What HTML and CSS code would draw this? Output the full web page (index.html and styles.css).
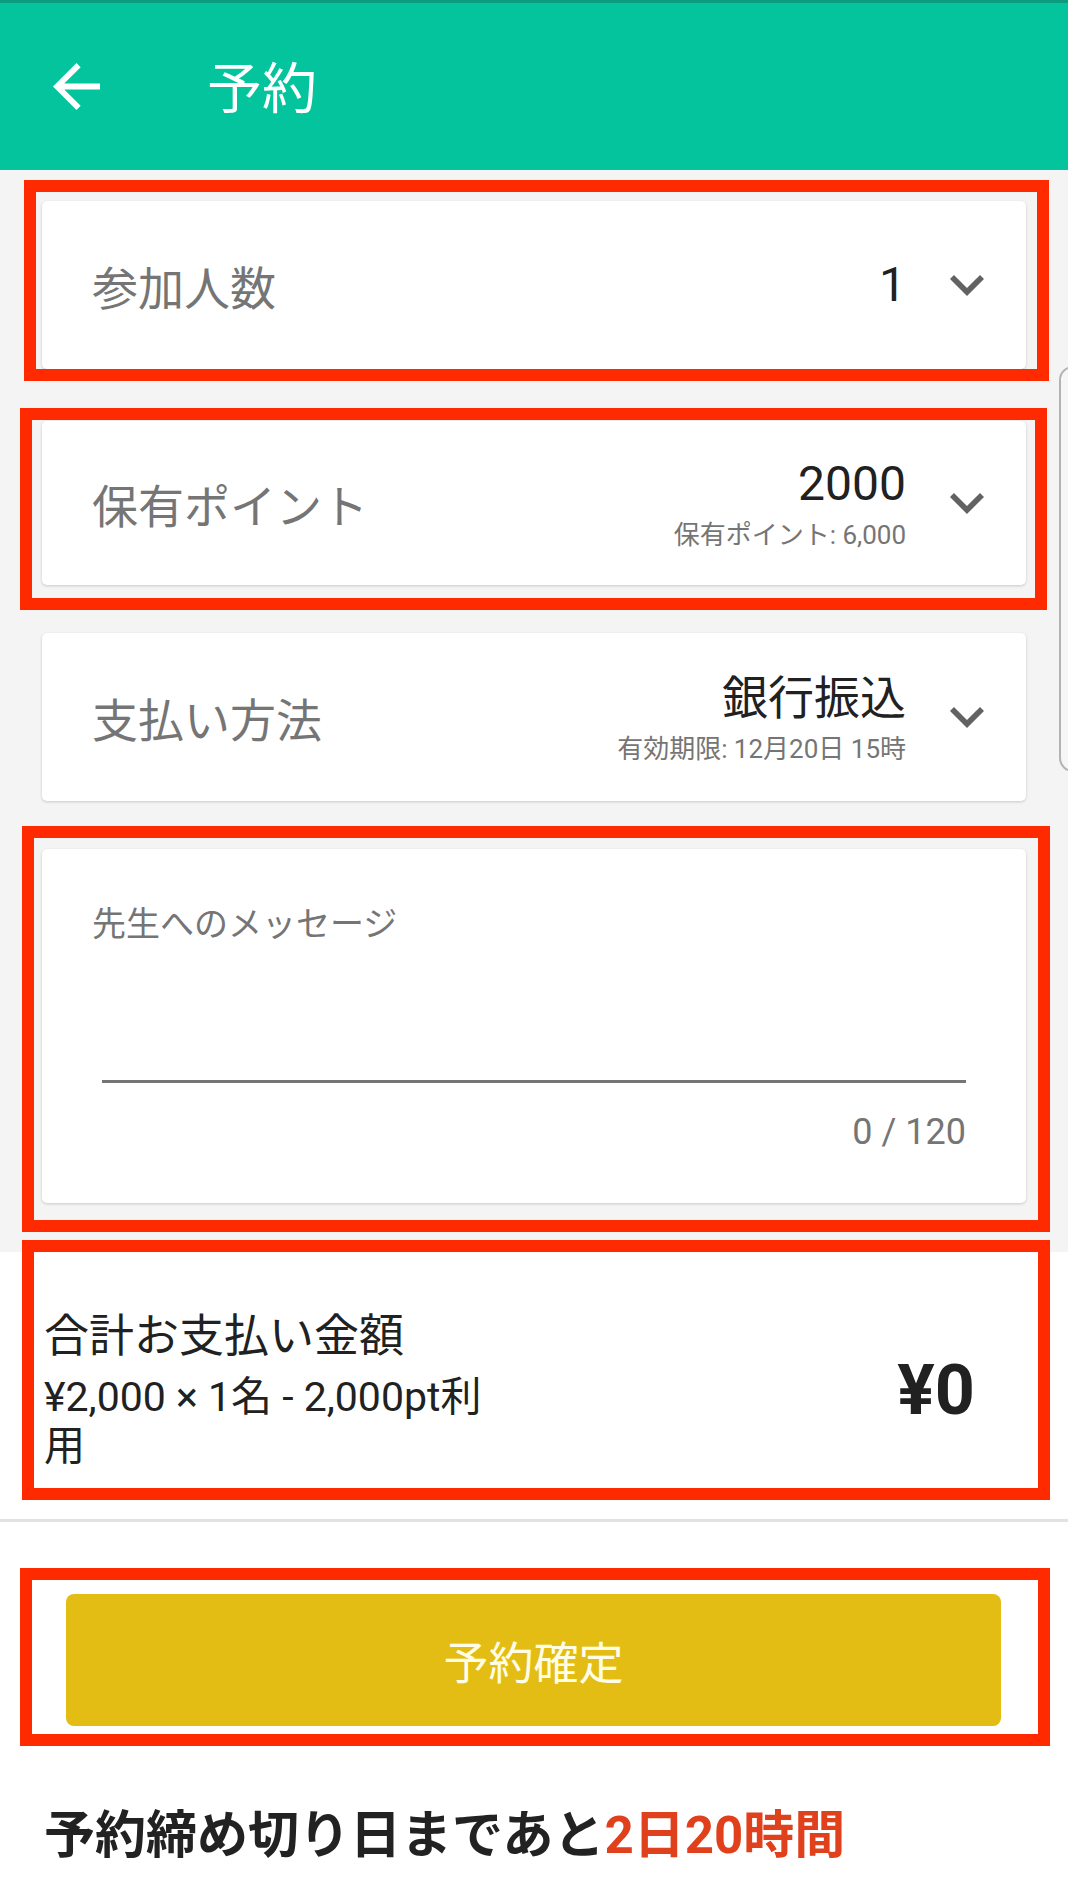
FILE: index.html
```html
<!DOCTYPE html>
<html lang="ja">
<head>
    <meta charset="UTF-8">
    <meta name="viewport" content="width=device-width, initial-scale=1.0">
    <title>予約</title>
    <link rel="stylesheet" href="styles.css">
</head>
<body>
    <div class="app">
        <header class="app-bar">
            <button class="back-btn" aria-label="戻る">
                <svg viewBox="4 4 16 16" width="47" height="47"><path d="M20 11H7.83l5.59-5.59L12 4l-8 8 8 8 1.41-1.41L7.83 13H20v-2z" fill="#fff"/></svg>
            </button>
            <h1 class="app-title">予約</h1>
        </header>

        <main class="form-area">
            <!-- 参加人数 -->
            <div class="card select-card mark mark-people">
                <span class="select-label">参加人数</span>
                <div class="select-value">
                    <span class="value-main">1</span>
                </div>
                <svg class="chevron" viewBox="6 8.59 12 7.41"><path d="M16.59 8.59L12 13.17 7.41 8.59 6 10l6 6 6-6z"/></svg>
            </div>

            <!-- 保有ポイント -->
            <div class="card select-card points-card mark mark-points">
                <span class="select-label">保有ポイント</span>
                <div class="select-value">
                    <span class="value-main">2000</span>
                    <span class="value-sub">保有ポイント: 6,000</span>
                </div>
                <svg class="chevron" viewBox="6 8.59 12 7.41"><path d="M16.59 8.59L12 13.17 7.41 8.59 6 10l6 6 6-6z"/></svg>
            </div>

            <!-- 支払い方法 -->
            <div class="card select-card">
                <span class="select-label">支払い方法</span>
                <div class="select-value">
                    <span class="value-main value-text">銀行振込</span>
                    <span class="value-sub">有効期限: 12月20日 15時</span>
                </div>
                <svg class="chevron" viewBox="6 8.59 12 7.41"><path d="M16.59 8.59L12 13.17 7.41 8.59 6 10l6 6 6-6z"/></svg>
            </div>

            <!-- メッセージ -->
            <div class="card message-card mark mark-message">
                <label class="message-label" for="message">先生へのメッセージ</label>
                <textarea class="message-input" id="message" maxlength="120"></textarea>
                <div class="message-count">0 / 120</div>
            </div>
        </main>

        <section class="total mark mark-total">
            <div class="total-info">
                <div class="total-title">合計お支払い金額</div>
                <div class="total-detail">¥2,000 × 1名 - 2,000pt利用</div>
            </div>
            <div class="total-price">¥0</div>
        </section>

        <div class="divider"></div>

        <div class="submit-area">
            <div class="mark mark-submit">
                <button class="submit-btn">予約確定</button>
            </div>
        </div>

        <p class="deadline">予約締め切り日まであと<span class="deadline-left">2日20時間</span></p>

        <div class="scroll-thumb"></div>
    </div>
</body>
</html>
```

FILE: styles.css
```css
* {
    box-sizing: border-box;
}

body {
    margin: 0;
    background: #fff;
    font-family: Roboto, "Noto Sans CJK JP", sans-serif;
    color: #212121;
}

.app {
    position: relative;
    width: 1068px;
    min-height: 1894px;
    overflow: hidden;
}

/* ヘッダー */
.app-bar {
    height: 170px;
    background: #04c49d;
    border-top: 3px solid #0b9c7f;
    display: flex;
    align-items: center;
    padding-left: 53px;
}

.back-btn {
    width: 47px;
    height: 47px;
    padding: 0;
    border: 0;
    background: none;
    display: flex;
}

.app-title {
    margin: 6px 0 0 107px;
    font-size: 55px;
    font-weight: 400;
    line-height: 1;
    color: #fff;
}

/* フォーム */
.form-area {
    background: #f4f4f4;
    padding: 31px 42px 49px;
    display: flex;
    flex-direction: column;
    gap: 48px;
}

.card {
    background: #fff;
    border-radius: 5px;
    box-shadow: 0 1px 3px rgba(0, 0, 0, 0.18);
}

.select-card {
    height: 168px;
    display: flex;
    align-items: center;
    padding: 0 42px 0 50px;
}

.points-card {
    height: 164px;
    margin-top: 4px;
}

.select-label {
    flex: 1;
    font-size: 46px;
    color: #757575;
}

.select-value {
    display: flex;
    flex-direction: column;
    align-items: flex-end;
    margin-right: 44px;
}

.value-main {
    font-size: 48px;
    line-height: 56px;
    color: #212121;
}

.value-text {
    font-size: 46px;
}

.value-sub {
    font-size: 26px;
    line-height: 32px;
    margin-top: 7px;
    color: #757575;
}

.chevron {
    width: 34px;
    height: 21px;
    fill: #626262;
}

.message-card {
    height: 354px;
    padding: 55px 60px 0 50px;
    display: flex;
    flex-direction: column;
}

.message-label {
    font-size: 34px;
    line-height: 40px;
    color: #757575;
}

.message-input {
    display: block;
    height: 139px;
    margin-left: 10px;
    padding: 0;
    border: 0;
    border-bottom: 3px solid #757575;
    resize: none;
    outline: none;
    background: transparent;
    font: inherit;
}

.message-count {
    margin-top: 28px;
    font-size: 36px;
    line-height: 43px;
    text-align: right;
    color: #757575;
}

/* 合計 */
.total {
    display: flex;
    align-items: center;
    justify-content: space-between;
    padding: 57px 93px 48px 44px;
}

.total-info {
    width: 462px;
}

.total-title {
    font-size: 45px;
    line-height: 56px;
    margin-bottom: 8px;
}

.total-detail {
    font-size: 41px;
    line-height: 49px;
}

.total-price {
    font-size: 70px;
    font-weight: 700;
}

.divider {
    height: 3px;
    background: #e2e2e2;
}

/* 予約確定 */
.submit-area {
    padding: 72px 67px 0 66px;
}

.submit-btn {
    display: block;
    width: 100%;
    height: 132px;
    border: 0;
    border-radius: 8px;
    background: #e3bd13;
    color: #fffde6;
    font-family: inherit;
    font-size: 45px;
    cursor: pointer;
}

.deadline {
    margin: 80px 0 0;
    padding-left: 44px;
    font-size: 51px;
    line-height: 60px;
    font-weight: 700;
    color: #222;
}

.deadline-left {
    color: #e0401c;
}

/* 注釈の赤枠 */
.mark {
    position: relative;
}

.mark::after {
    content: "";
    position: absolute;
    border: 12px solid #ff2a00;
    pointer-events: none;
}

.mark-people::after {
    inset: -21px -23px -12px -18px;
}

.mark-points::after {
    inset: -13px -21px -25px -22px;
}

.mark-message::after {
    inset: -23px -24px -29px -20px;
}

.mark-total::after {
    inset: -12px 18px 19px 22px;
}

.mark-submit::after {
    inset: -26px -49px -20px -46px;
}

.scroll-thumb {
    position: absolute;
    left: 1059px;
    top: 366px;
    width: 30px;
    height: 406px;
    border: 2px solid #b3b3b3;
    border-radius: 14px;
    background: #f6f6f6;
}
```
